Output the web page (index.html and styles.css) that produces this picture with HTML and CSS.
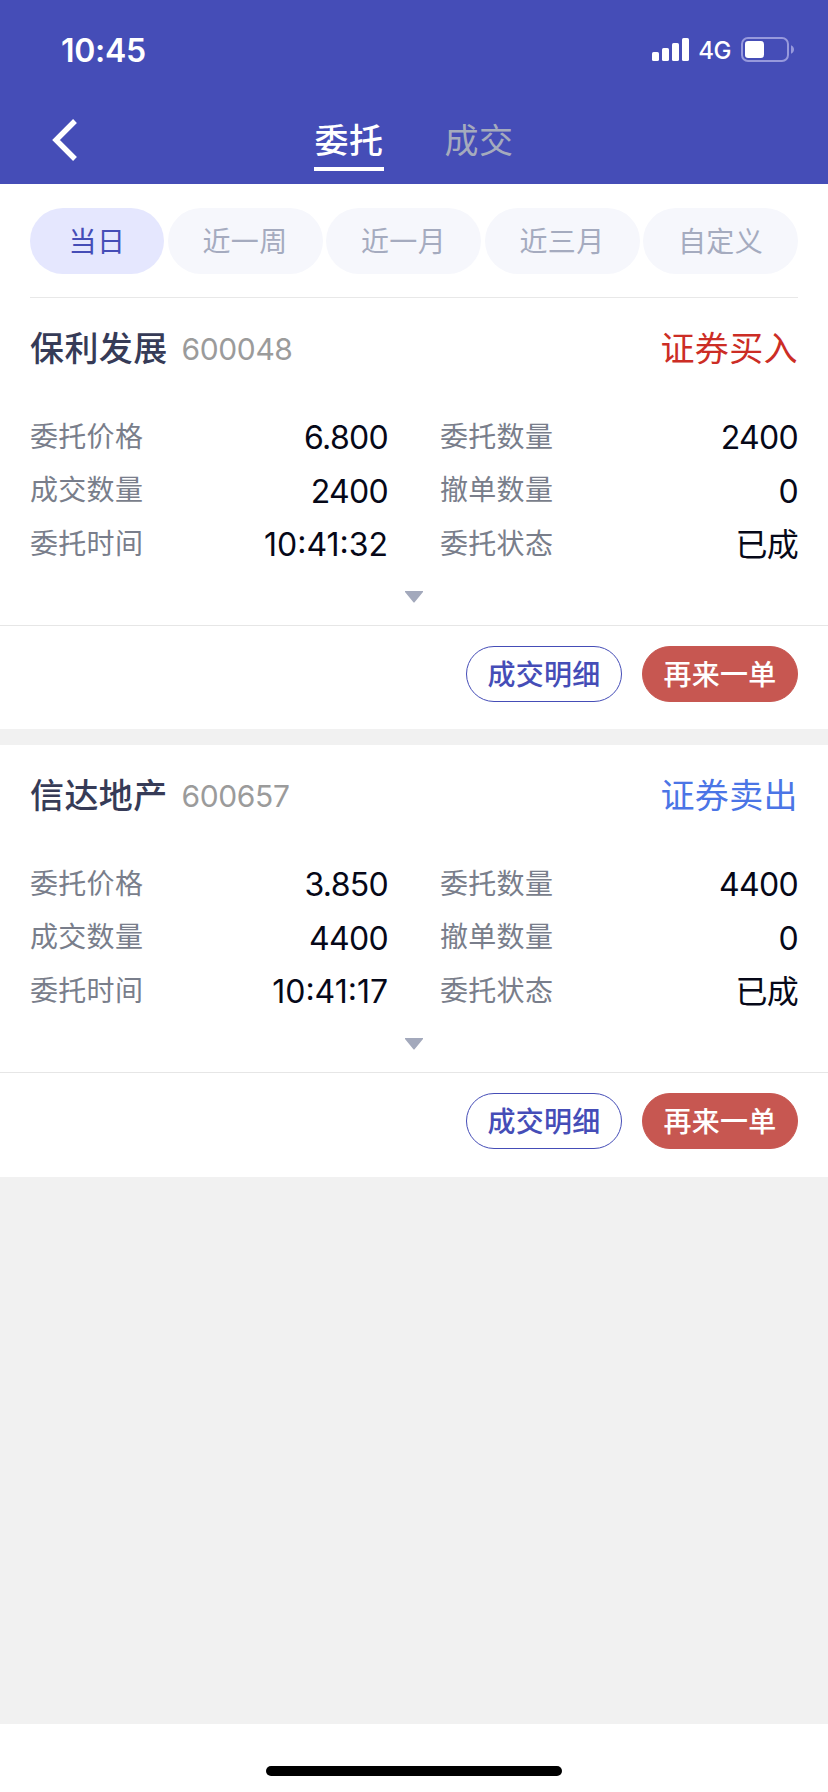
FILE: index.html
```html
<!DOCTYPE html>
<html lang="zh-CN">
<head>
<meta charset="utf-8">
<title>委托</title>
<link rel="stylesheet" href="styles.css">
</head>
<body>
<header class="header">
  <div class="status">
    <span class="clock">10:45</span>
    <div class="indicators">
      <svg class="signal" width="37" height="23" viewBox="0 0 37 23" fill="#fff"><rect x="0" y="14" width="7" height="9" rx="1.6"/><rect x="10" y="10" width="7" height="13" rx="1.6"/><rect x="20" y="5" width="7" height="18" rx="1.6"/><rect x="30" y="0" width="7" height="23" rx="1.6"/></svg>
      <span class="network">4G</span>
      <svg class="battery" width="53" height="25" viewBox="0 0 53 25"><rect x="1" y="1" width="46" height="23" rx="6" fill="none" stroke="#9799dc" stroke-width="2"/><rect x="4" y="4" width="19" height="17" rx="3.2" fill="#fff"/><path d="M50 8.2Q53 9.6 53 12.5T50 16.8Z" fill="#9799dc"/></svg>
    </div>
  </div>
  <nav class="nav">
    <svg class="back" width="26" height="42" viewBox="0 0 26 42" fill="none" stroke="#fff" stroke-width="5.4"><path d="M23 2 4 21 23 40"/></svg>
    <div class="tabs"><span class="tab tab-active">委托</span><span class="tab">成交</span></div>
  </nav>
</header>
<main class="main">
  <div class="filters">
    <span class="pill pill-active">当日</span><span class="pill">近一周</span><span class="pill">近一月</span><span class="pill">近三月</span><span class="pill">自定义</span>
  </div>
  <section class="card">
    <div class="card-head"><span class="name">保利发展</span><span class="code">600048</span><span class="side buy">证券买入</span></div>
    <div class="grid">
      <div class="cell"><span class="label">委托价格</span><span class="value">6.800</span></div>
      <div class="cell"><span class="label">委托数量</span><span class="value">2400</span></div>
      <div class="cell"><span class="label">成交数量</span><span class="value">2400</span></div>
      <div class="cell"><span class="label">撤单数量</span><span class="value">0</span></div>
      <div class="cell"><span class="label">委托时间</span><span class="value time">10:41:32</span></div>
      <div class="cell"><span class="label">委托状态</span><span class="value">已成</span></div>
    </div>
    <div class="expand"><svg width="18" height="12" viewBox="0 0 18 12"><path d="M0 0H18V1L9.8 11Q9 12 8.2 11L0 1Z" fill="#a3a9bc"/></svg></div>
    <div class="actions"><span class="btn outline">成交明细</span><span class="btn solid">再来一单</span></div>
  </section>
  <section class="card">
    <div class="card-head"><span class="name">信达地产</span><span class="code">600657</span><span class="side sell">证券卖出</span></div>
    <div class="grid">
      <div class="cell"><span class="label">委托价格</span><span class="value">3.850</span></div>
      <div class="cell"><span class="label">委托数量</span><span class="value">4400</span></div>
      <div class="cell"><span class="label">成交数量</span><span class="value">4400</span></div>
      <div class="cell"><span class="label">撤单数量</span><span class="value">0</span></div>
      <div class="cell"><span class="label">委托时间</span><span class="value time">10:41:17</span></div>
      <div class="cell"><span class="label">委托状态</span><span class="value">已成</span></div>
    </div>
    <div class="expand"><svg width="18" height="12" viewBox="0 0 18 12"><path d="M0 0H18V1L9.8 11Q9 12 8.2 11L0 1Z" fill="#a3a9bc"/></svg></div>
    <div class="actions"><span class="btn outline">成交明细</span><span class="btn solid">再来一单</span></div>
  </section>
</main>
<footer class="home"><div class="home-bar"></div></footer>
</body>
</html>
```
FILE: styles.css
```css
* { box-sizing: border-box; }
body {
  margin: 0;
  width: 828px;
  height: 1792px;
  overflow: hidden;
  display: flex;
  flex-direction: column;
  background: #f1f1f1;
  font-family: Inter, "Noto Sans CJK SC", sans-serif;
  white-space: nowrap;
}
svg { display: block; }
.header { height: 184px; background: #454db7; color: #fff; }
.status { height: 96px; padding: 3px 34px 0 61px; display: flex; align-items: center; justify-content: space-between; }
.clock { font-size: 32px; font-weight: 600; line-height: 40px; letter-spacing: -.3px; padding-top: 2px; }
.indicators { display: flex; align-items: center; }
.network { margin: 3px 10px 0 9px; font-size: 24px; font-weight: 500; line-height: 28px; letter-spacing: -.5px; }
.nav { height: 88px; padding: 0 0 0 52px; display: flex; align-items: flex-start; }
.back { margin-top: 23px; }
.tabs { margin: 18px 0 0 236px; display: flex; gap: 60px; }
.tab { width: 70px; height: 57px; padding-top: 2px; text-align: center; font-size: 34px; line-height: 50px; letter-spacing: .6px; color: #a5abbd; }
.tab-active { color: #fff; font-weight: 500; border-bottom: 4px solid #fff; }
.main { flex: 1; }
.filters { margin: 0; padding: 24px 30px 0; height: 114px; display: flex; justify-content: space-between; background: linear-gradient(#e8e8e8, #e8e8e8) 30px 113px / 768px 1px no-repeat #fff; }
.pill { width: 155px; height: 66px; padding-top: 2px; border-radius: 33px; background: #f6f7fc; color: #a5abbf; text-align: center; font-size: 28px; line-height: 65px; letter-spacing: .4px; }
.pill-active { width: 134px; background: #e5e7fe; color: #454db7; }
.card { height: 431px; margin-bottom: 16px; background: #fff; }
.card:last-child { height: 432px; margin-bottom: 0; }
.card-head { height: 110px; padding: 0 30px; display: flex; align-items: flex-start; }
.name { font-size: 34px; font-weight: 500; line-height: 50px; margin-top: 26px; letter-spacing: .4px; color: #363b57; }
.code { font-size: 30px; line-height: 40px; margin: 31px 0 0 14px; letter-spacing: -.4px; color: #9b9b9b; }
.side { margin: 26px 0 0 auto; font-size: 34px; line-height: 50px; letter-spacing: .4px; }
.buy { color: #cc2d25; }
.sell { color: #4b75e6; }
.grid { padding: 0 30px; display: grid; grid-template-columns: 358px 358px; column-gap: 52px; grid-auto-rows: 53.5px; }
.cell { display: flex; justify-content: space-between; }
.label { font-size: 28px; line-height: 52px; padding-top: 2.5px; letter-spacing: .3px; color: #797e8b; }
.value { font-size: 32px; line-height: 57px; padding-top: 1.3px; letter-spacing: -.7px; color: #060818; }
.time { letter-spacing: 0; }
.expand { height: 56.5px; padding-top: 22.5px; display: flex; justify-content: center; }
.actions { height: 104px; border-top: 1px solid #e6e6e6; padding: 20px 30px 0; display: flex; justify-content: flex-end; gap: 20px; }
.btn { width: 156px; height: 56px; padding-top: 2px; border-radius: 28px; border: 1px solid #454db7; text-align: center; font-size: 28px; font-weight: 500; line-height: 53px; letter-spacing: .3px; }
.outline { color: #454db7; }
.solid { background: #c75751; border-color: #c75751; color: #fff; }
.home { height: 68px; padding-top: 42px; background: #fff; display: flex; justify-content: center; align-items: flex-start; }
.home-bar { width: 296px; height: 10px; border-radius: 5px; background: #000; }
```
